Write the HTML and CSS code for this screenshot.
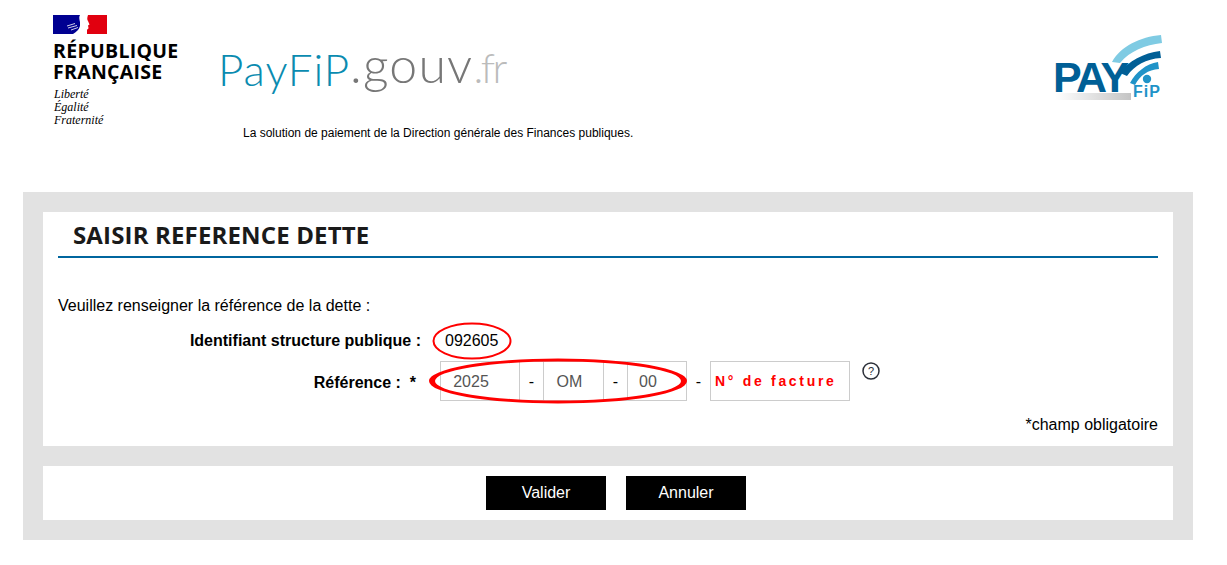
FILE: index.html
```html
<!DOCTYPE html>
<html lang="fr">
<head>
    <meta charset="UTF-8">
    <meta name="viewport" content="width=device-width, initial-scale=1.0">
    <title>PayFiP - Saisir référence dette</title>
    <link rel="stylesheet" href="styles.css">
</head>
<body>

    <header class="header">
        <div class="marianne">
            <svg class="flag" width="54" height="19" viewBox="0 0 54 19">
                <rect width="54" height="19" fill="#fff"/>
                <rect width="27" height="19" fill="#000091"/>
                <rect x="34" width="20" height="19" fill="#e1000f"/>
                <path d="M27 0 L35 0 C34 3 34 5 35 6 L36.500 9.500 L35 10.500 L35.500 13 C35 15 32 15 31 16 L32 19 L20 19 C23 17 26 15 27 11 C28 7 25 3 27 0 Z" fill="#fff"/>
                <path d="M14 11 L22 8.500 M15 13 L24 10.500 M18 15 L25 12.500" stroke="#cfcfe8" stroke-width="1" fill="none"/>
            </svg>
            <div class="marianne-name">RÉPUBLIQUE<br>FRANÇAISE</div>
            <div class="marianne-motto">Liberté<br>Égalité<br>Fraternité</div>
        </div>

        <div class="brand">
            <div class="brand-name"><span class="brand-pay">PayFiP</span><span class="brand-gouv">.gouv</span><span class="brand-fr">.fr</span></div>
            <div class="tagline">La solution de paiement de la Direction générale des Finances publiques.</div>
        </div>

        <div class="pay-logo">
            <div class="pay-bar"></div>
            <div class="pay-word">PAY</div>
            <div class="pay-fip">FiP</div>
            <svg class="waves" width="135" height="85" viewBox="0 0 135 85">
                <path d="M72 37 C81 21 100 12 121 10 L122 18 C105 20 90 26 80 38 Z" fill="#7fcbe3"/>
                <path d="M80 48 C88 36 104 28 120 26 L121 33 C106 34 95 40 87 51 Z" fill="#005f96"/>
                <path d="M90 58 C96 47 106 39 118 37 L119 44 C108 45 100 50 95 60 Z" fill="#1f93c8"/>
                <circle cx="107" cy="54" r="4.200" fill="#1f93c8"/>
            </svg>
        </div>
    </header>

    <main class="frame">
        <section class="panel panel-form">
            <h1 class="title">SAISIR REFERENCE DETTE</h1>
            <p class="intro">Veuillez renseigner la référence de la dette :</p>

            <div class="row row-id">
                <div class="label">Identifiant structure publique :</div>
                <div class="id-value">
                    092605
                    <svg class="ring ring-id" width="80" height="38" viewBox="0 0 80 38">
                        <ellipse cx="40" cy="19" rx="38.500" ry="17.500" fill="none" stroke="#f00" stroke-width="2"/>
                    </svg>
                </div>
            </div>

            <div class="row row-ref">
                <div class="label">Référence : &nbsp;*</div>
                <div class="ref-group">
                    <div class="ref-box">
                        <input class="ref-input ref-year" type="text" value="2025">
                        <span class="ref-dash">-</span>
                        <input class="ref-input ref-code" type="text" value="OM">
                        <span class="ref-dash">-</span>
                        <input class="ref-input ref-num" type="text" value="00">
                    </div>
                    <svg class="ring ring-ref" width="260" height="46" viewBox="0 0 260 46">
                        <path fill-rule="evenodd" fill="#f00" d="M1 23 A129 22.500 0 0 1 259 23 A129 22.500 0 0 1 1 23 Z M7 23 A123 19.500 0 0 0 253 23 A123 19.500 0 0 0 7 23 Z"/>
                    </svg>
                </div>
                <span class="sep">-</span>
                <input class="invoice" type="text" placeholder="N° de facture">
                <svg class="help" width="18" height="18" viewBox="0 0 18 18">
                    <circle cx="9" cy="9" r="8" fill="#fff" stroke="#2b2f38" stroke-width="1.500"/>
                    <text x="9" y="13" text-anchor="middle" class="help-mark">?</text>
                </svg>
            </div>

            <div class="required">*champ obligatoire</div>
        </section>

        <section class="panel panel-actions">
            <button class="btn">Valider</button>
            <button class="btn">Annuler</button>
        </section>
    </main>

</body>
</html>
```

FILE: styles.css
```css
body {
    font-family: 'Liberation Sans', Arial, sans-serif;
    font-size: 16px;
    color: #000;
    background: #fff;
    margin: 0;
}

/* Header */
.header {
    height: 192px;
    display: flex;
    padding: 15px 0 0 53px;
    box-sizing: border-box;
}

.marianne {
    width: 167px;
}

.flag {
    display: block;
}

.marianne-name {
    font-family: 'Open Sans', sans-serif;
    font-weight: 700;
    font-size: 19.5px;
    line-height: 21px;
    margin-top: 6px;
    letter-spacing: 0.3px;
}

.marianne-motto {
    font-family: 'Liberation Serif', serif;
    font-style: italic;
    font-size: 12px;
    line-height: 13px;
    margin: 6px 0 0 1px;
}

.brand {
    width: 834px;
}

.brand-name {
    font-family: 'Lato', sans-serif;
    font-size: 50px;
    line-height: 60px;
    margin: 19px 0 0 -2px;
    white-space: nowrap;
}

.brand-pay {
    color: #0a8bb0;
    font-weight: 300;
    font-size: 44px;
    letter-spacing: 0.9px;
}

.brand-gouv {
    color: #777;
    font-weight: 300;
    letter-spacing: 1.2px;
    vertical-align: 3px;
}

.brand-fr {
    color: #bbb;
    font-weight: 300;
    font-size: 42px;
    letter-spacing: -2.5px;
    vertical-align: 3px;
}

.tagline {
    font-size: 12px;
    margin: 27px 0 0 23px;
    white-space: nowrap;
}

.pay-logo {
    position: relative;
    width: 135px;
    height: 85px;
    margin: 10px 0 0 -14px;
}

.waves {
    position: absolute;
    left: 0;
    top: 0;
}

.pay-word {
    position: absolute;
    left: 13px;
    top: 30px;
    font-weight: 700;
    font-size: 43px;
    line-height: 44px;
    letter-spacing: -2.5px;
    color: #005f96;
}

.pay-fip {
    position: absolute;
    left: 93px;
    top: 58px;
    font-weight: 700;
    font-size: 16px;
    line-height: 18px;
    letter-spacing: 1px;
    color: #1f93c8;
}

.pay-bar {
    position: absolute;
    left: 15px;
    top: 68px;
    width: 76px;
    height: 7px;
    background: linear-gradient(to right, #fff, #c4c4c4);
}

/* Main frame */
.frame {
    margin: 0 34px 0 23px;
    padding: 20px;
    background: #e2e2e2;
    display: flex;
    flex-direction: column;
    gap: 20px;
}

.panel {
    background: #fff;
}

.panel-form {
    height: 234px;
    padding: 0 15px;
    box-sizing: border-box;
}

.title {
    font-family: 'Open Sans', sans-serif;
    font-size: 24px;
    font-weight: 700;
    line-height: 30px;
    letter-spacing: 0.15px;
    color: #1a1a1a;
    margin: 0;
    padding: 8px 15px 6px;
    border-bottom: 2px solid #00669e;
}

.intro {
    margin: 39px 0 0;
    line-height: 18px;
}

.row {
    display: flex;
    align-items: center;
}

.label {
    font-weight: 700;
    text-align: right;
}

.row-id {
    margin-top: 8px;
    height: 36px;
}

.row-id .label {
    width: 363px;
}

.id-value {
    position: relative;
    margin-left: 24px;
}

.ring {
    position: absolute;
    pointer-events: none;
}

.ring-id {
    left: -13px;
    top: -10px;
}

.row-ref {
    margin-top: 2px;
    height: 40px;
}

.row-ref .label {
    width: 358px;
    padding-top: 3px;
}

.ref-group {
    position: relative;
    margin-left: 24px;
}

.ref-box {
    display: flex;
    align-items: center;
    width: 247px;
    height: 40px;
    border: 1px solid #ccc;
    box-sizing: border-box;
}

.ref-input {
    height: 38px;
    padding: 2px 0 0;
    border: none;
    border-right: 1px solid #ccc;
    box-sizing: border-box;
    font-family: inherit;
    font-size: 16px;
    color: #555;
    text-align: center;
}

.ref-year {
    width: 79px;
    padding-right: 18px;
}

.ref-code {
    width: 60px;
    padding-right: 8px;
}

.ref-num {
    flex: 1;
    min-width: 0;
    border-right: none;
    padding-right: 18px;
}

.ref-dash {
    width: 24px;
    padding-top: 2px;
    text-align: center;
    border-right: 1px solid #ccc;
    line-height: 36px;
    box-sizing: border-box;
}

.ring-ref {
    left: -12px;
    top: -3px;
}

.sep {
    width: 23px;
    padding-top: 2px;
    text-align: center;
}

.invoice {
    width: 140px;
    height: 40px;
    padding: 0 0 0 4px;
    border: 1px solid #ccc;
    box-sizing: border-box;
    font-family: 'Liberation Sans', sans-serif;
    font-size: 14px;
    font-weight: 700;
    letter-spacing: 2.7px;
}

.invoice::placeholder {
    color: #f00;
    opacity: 1;
}

.help {
    align-self: flex-start;
    margin-left: 12px;
    margin-top: 1px;
}

.help-mark {
    font-family: 'Liberation Sans', sans-serif;
    font-size: 11px;
    fill: #2b2f38;
}

.required {
    text-align: right;
    margin-top: 15px;
    line-height: 18px;
}

.panel-actions {
    display: flex;
    justify-content: center;
    gap: 20px;
    padding: 10px 10px 10px 26px;
}

.btn {
    width: 120px;
    height: 34px;
    padding: 0;
    background: #000;
    color: #fff;
    border: none;
    font-family: inherit;
    font-size: 16px;
    cursor: pointer;
}
```
